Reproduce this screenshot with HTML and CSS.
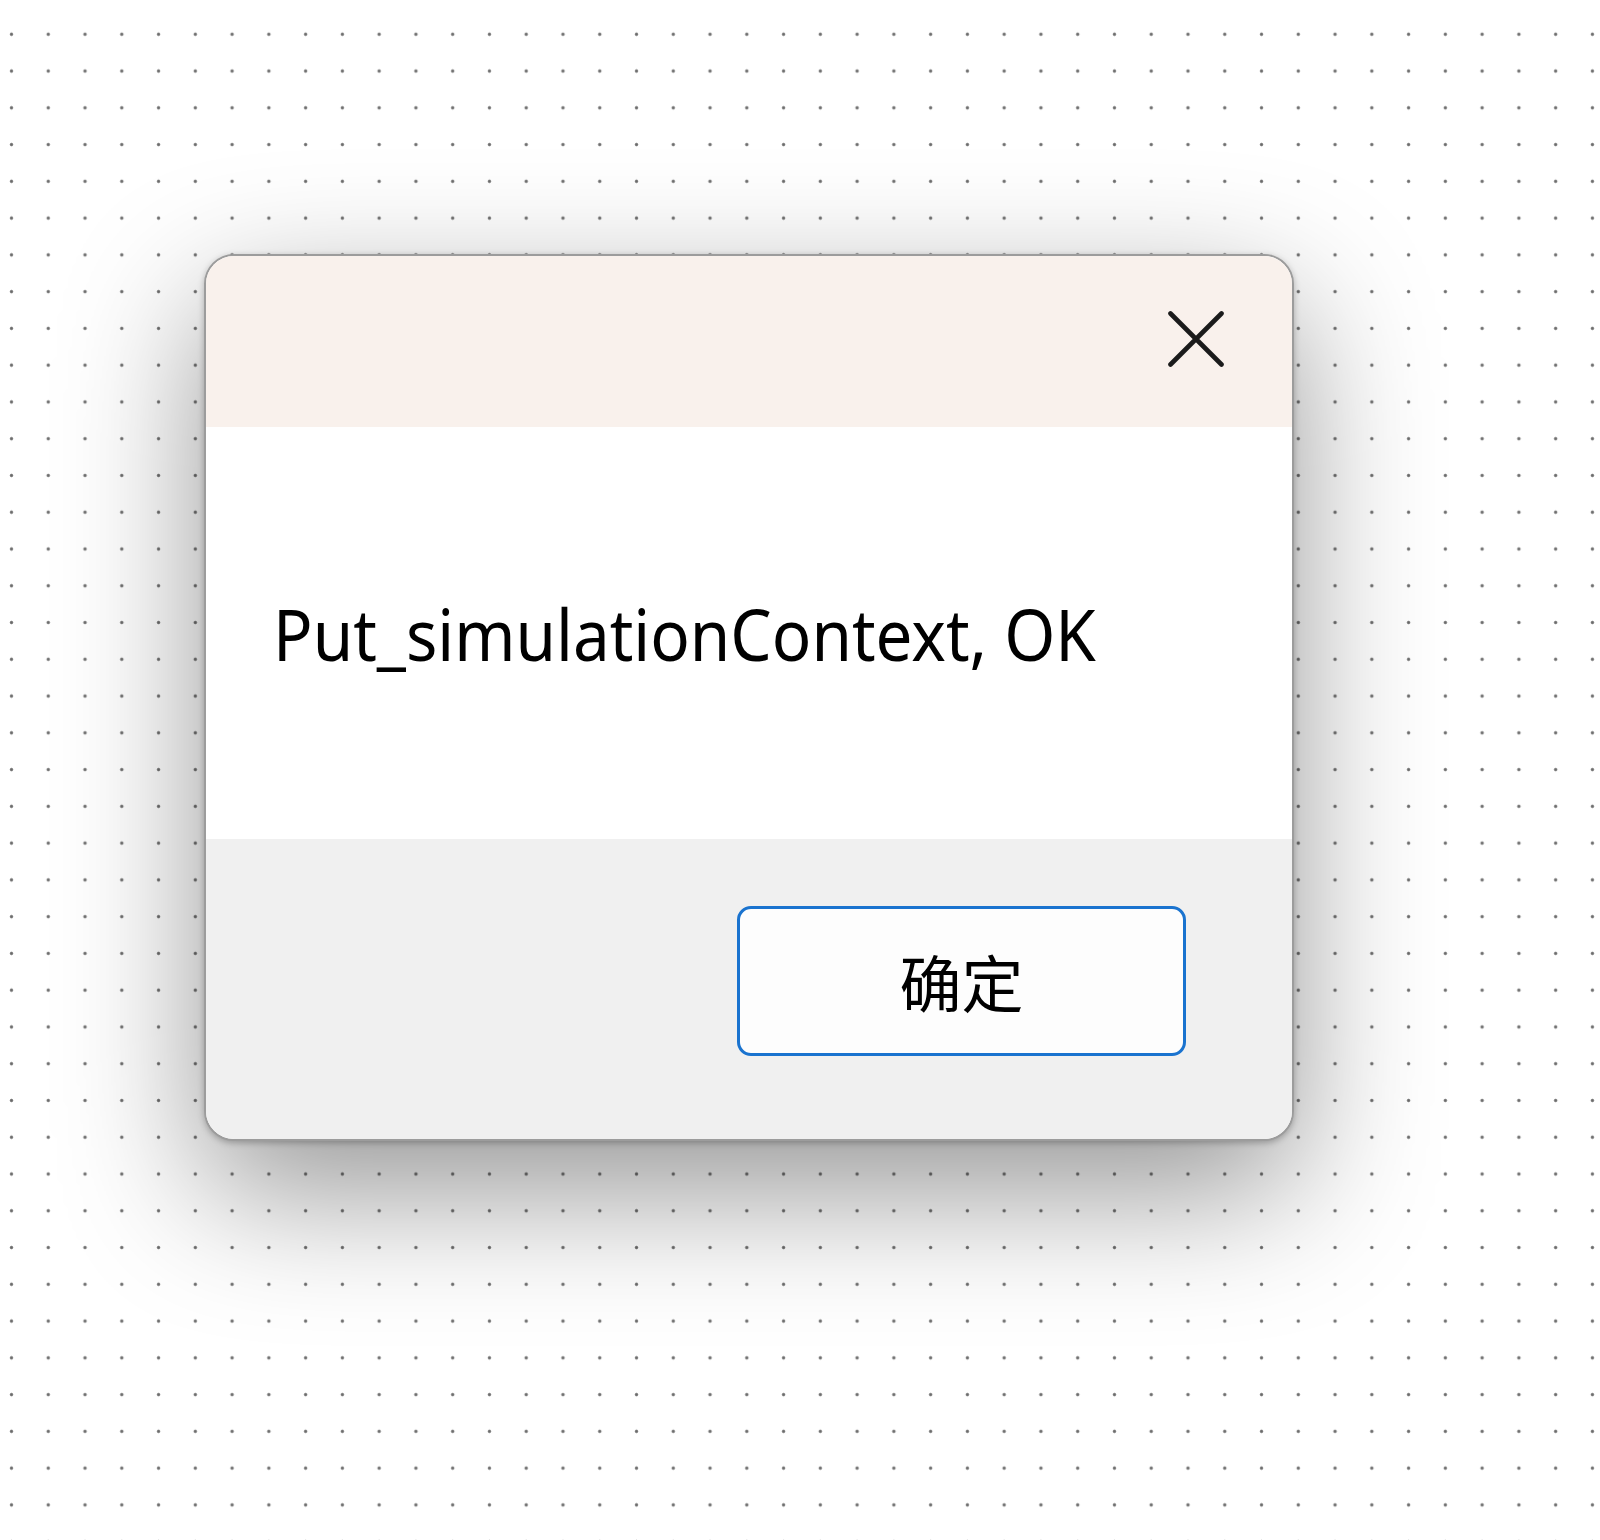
FILE: index.html
```html
<!DOCTYPE html>
<html lang="zh-CN">
<head>
<meta charset="utf-8">
<title>Dialog</title>
<link rel="stylesheet" href="styles.css">
</head>
<body>
<div class="page">
  <div class="dialog">
    <div class="dialog-header">
      <button class="close-btn" aria-label="关闭">
        <svg width="56" height="56" viewBox="0 0 56 56">
          <path d="M2.5 2.5 L53.5 53.5 M53.5 2.5 L2.5 53.5" stroke="#1b1b1b" stroke-width="4.6" stroke-linecap="round" fill="none"/>
        </svg>
      </button>
    </div>
    <div class="dialog-body">
      <span class="message">Put_simulationContext, OK</span>
    </div>
    <div class="dialog-footer">
      <button class="ok-btn">确定</button>
    </div>
  </div>
</div>
</body>
</html>
```

FILE: styles.css
```css
html, body {
  margin: 0;
  padding: 0;
}
body {
  width: 1600px;
  height: 1540px;
  overflow: hidden;
  background-color: #ffffff;
  background-image: radial-gradient(circle at center, #6a6a6a 0, #767676 1.2px, rgba(120,120,120,0) 2.2px);
  background-size: 36.77px 36.77px;
  background-position: -6.9px 15.9px;
  font-family: "Noto Sans", "Noto Sans CJK SC", sans-serif;
}
.page {
  padding-top: 254px;
  padding-left: 204px;
}
.dialog {
  width: 1090px;
  height: 887px;
  box-sizing: border-box;
  border: 2px solid #9c9c9c;
  border-radius: 30px;
  overflow: hidden;
  display: flex;
  flex-direction: column;
  box-shadow: 0 50px 140px rgba(0,0,0,0.42), 0 2px 6px rgba(0,0,0,0.25);
  background: #ffffff;
}
.dialog-header {
  height: 171px;
  flex: none;
  background: #f9f1ec;
  display: flex;
  justify-content: flex-end;
  align-items: flex-start;
  padding: 55px 68px 0 0;
  box-sizing: border-box;
}
.close-btn {
  width: 56px;
  height: 56px;
  padding: 0;
  border: none;
  background: transparent;
  display: block;
}
.close-btn svg {
  display: block;
}
.dialog-body {
  height: 412px;
  flex: none;
  display: flex;
  align-items: center;
  padding-left: 67px;
  box-sizing: border-box;
}
.message {
  font-family: "Noto Sans", sans-serif;
  font-size: 71px;
  color: #000000;
  display: inline-block;
  transform-origin: left center;
  transform: scaleX(0.923);
  white-space: nowrap;
}
.dialog-footer {
  flex: 1;
  background: #f0f0f0;
  display: flex;
  justify-content: flex-end;
  align-items: flex-start;
  padding: 67px 106px 0 0;
  box-sizing: border-box;
}
.ok-btn {
  width: 449px;
  height: 150px;
  box-sizing: border-box;
  border: 3px solid #1a73cf;
  border-radius: 14px;
  background: #fdfdfd;
  font-family: "Noto Sans CJK SC", sans-serif;
  font-size: 62px;
  color: #000000;
  padding: 0;
  line-height: 1;
}
```
